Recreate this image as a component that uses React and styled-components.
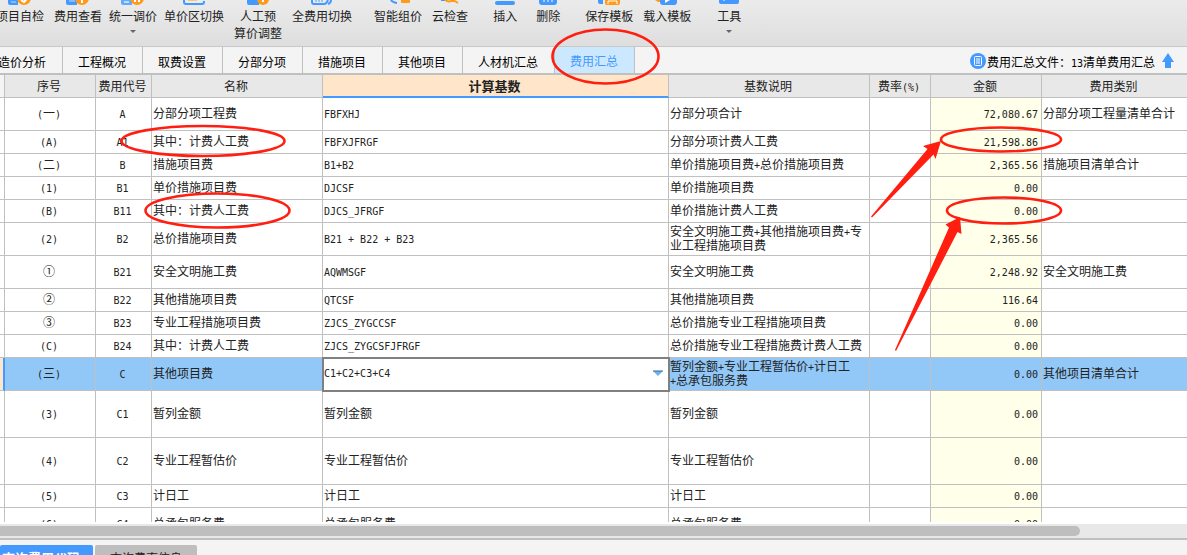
import React from "react";
import styled, { createGlobalStyle, css } from "styled-components";

const BLUE = "#4499ff";
const ORANGE = "#ff9a1a";
const LINE = "#c0c0c0";
const RED = "#ff1e10";

const GlobalStyle = createGlobalStyle`
  *, *::before, *::after { box-sizing: border-box; }
  body { margin: 0; background: #f4f4f4; }
  button, input { font: inherit; color: inherit; }
`;

const Page = styled.div`
  position: relative;
  display: flex;
  flex-direction: column;
  height: 100vh;
  overflow: hidden;
  font-family: "Noto Sans CJK SC", sans-serif;
  font-size: 12px;
  line-height: 17px;
  color: #222;
`;

const Toolbar = styled.header`
  display: flex;
  flex: none;
  height: 47px;
  gap: 10px;
  margin-left: -4px;
  overflow: hidden;
  background: linear-gradient(#ebebeb, #dedede);
  border-bottom: 1px solid #c8c8c8;
`;

const ToolGroup = styled.div`
  display: flex;
  align-items: flex-start;
  gap: ${(p) => p.$gap || 10}px;
  margin-left: ${(p) => p.$lead || 0}px;
`;

const ToolButton = styled.button`
  display: flex;
  flex-direction: column;
  align-items: center;
  padding: 0;
  border: 0;
  background: none;
  white-space: pre;
  cursor: pointer;
`;

const ToolIcon = styled.svg`
  display: block;
  width: 24px;
  height: 7px;
  margin: 0 -2px;
`;

const Caret = styled.svg`
  width: 6px;
  height: 4px;
  margin-top: 6px;
`;

const TabBar = styled.nav`
  display: flex;
  flex: none;
  align-items: stretch;
  height: 28px;
  background: #f4f4f4;
  border-bottom: 2px solid ${LINE};
  color: #000;
`;

const TabList = styled.div`
  display: flex;
  flex: 1;
  margin-left: -17px;
`;

const Tab = styled.button`
  flex: none;
  padding: ${(p) => (p.$active ? 0 : 2)}px 16px 0 15px;
  border: 0;
  border-right: 1px solid ${LINE};
  background: ${(p) => (p.$active ? "#cce8ff" : "transparent")};
  color: ${(p) => (p.$active ? BLUE : "inherit")};
  cursor: pointer;
`;

const FileInfo = styled.div`
  display: flex;
  align-items: center;
  gap: 1px;
  padding: 2px 13px 0 0;
`;

const FileArrow = styled.svg`
  margin-left: 6px;
`;

const GridView = styled.main`
  flex: 1;
  min-height: 0;
  overflow: hidden;
  background: #fff;
  border-bottom: 2px solid #fff;
`;

const Grid = styled.table`
  width: 100%;
  table-layout: fixed;
  border-collapse: separate;
  border-spacing: 0;
  line-height: 14px;

  th:last-child,
  td:last-child {
    border-right: 0;
  }
`;

const Head = styled.th`
  height: 23px;
  padding: 0 2px 0 0;
  font-size: ${(p) => (p.$current ? 13 : 12)}px;
  font-weight: ${(p) => (p.$current ? 700 : 400)};
  background: ${(p) => (p.$current ? "#ffe6cb" : p.$blank ? "#f4f4f4" : "#e8e8e8")};
  border-right: 1px solid ${LINE};
  border-bottom: ${(p) => (p.$current ? `2px solid ${BLUE}` : `1px solid ${LINE}`)};
`;

const Row = styled.tr`
  height: ${(p) => p.$height}px;
  background: ${(p) => (p.$selected ? "#92c8f8" : "#fff")};
`;

const Cell = styled.td`
  padding: 0 3px 2px 1px;
  text-align: ${(p) => p.$align || "left"};
  white-space: pre;
  border-right: 1px solid ${LINE};
  border-bottom: 1px solid ${LINE};
  ${(p) => p.$amount && css`background: ${p.$selected ? "#92c8f8" : "#ffffea"};`}
  ${(p) =>
    p.$editing &&
    css`
      background: #fff;
      outline: 2px solid #808080;
      outline-offset: -1px;
    `}
`;

const Marker = styled(Cell)`
  padding: 0;
  ${(p) =>
    p.$selected &&
    css`
      background: #ffe6cb;
      border-right: 2px solid ${BLUE};
    `}
`;

const Latin = styled.span`
  font-family: "DejaVu Sans Mono", monospace;
  font-size: 10px;
  line-height: 10px;
`;

const Combo = styled.div`
  display: flex;
  align-items: center;
`;

const ComboInput = styled.input`
  flex: 1;
  min-width: 0;
  height: 20px;
  padding: 0;
  border: 0;
  outline: 0;
  background: none;
  font-family: "DejaVu Sans Mono", monospace;
  font-size: 10px;
`;

const ComboButton = styled.button`
  display: flex;
  padding: 4px 2px;
  border: 0;
  background: none;
`;

const ScrollTrack = styled.div`
  flex: none;
  height: 16px;
  padding: 2px 0;
  background: #e8e8e8;
  border-bottom: 2px solid ${LINE};
`;

const ScrollThumb = styled.div`
  width: 91%;
  height: 10px;
  background: #bebebe;
  border-radius: 0 5px 5px 0;
`;

const BottomTabs = styled.footer`
  display: flex;
  flex: none;
  align-items: flex-start;
  gap: 2px;
  height: 15px;
  padding-top: 5px;
  overflow: hidden;
  background: #f4f4f4;
`;

const BottomTab = styled.button`
  flex: none;
  height: 25px;
  padding: 0 ${(p) => (p.$active ? 13 : 15)}px 0 ${(p) => (p.$active ? 2 : 15)}px;
  border: 0;
  border-radius: 2px 2px 0 0;
  font-size: ${(p) => (p.$active ? 13 : 12)}px;
  font-weight: ${(p) => (p.$active ? 700 : 400)};
  color: ${(p) => (p.$active ? "#fff" : "#222")};
  background: ${(p) => (p.$active ? BLUE : "#bebebe")};
`;

const Annotations = styled.svg`
  position: absolute;
  top: 0;
  left: 0;
  pointer-events: none;
`;

const icons = {
  check: (
    <>
      <path d="M0 0h10v5H2q-2 0-2-2z" fill={BLUE} />
      <path d="M3 2h5" stroke="#b9dcff" />
      <circle cx="16" cy="-2" r="7" fill={ORANGE} />
      <path d="M13 0l3 2 3-3" stroke="#fff" strokeWidth="2" fill="none" />
    </>
  ),
  view: (
    <>
      <path d="M0 0h11v5H2q-2 0-2-2z" fill={BLUE} />
      <path d="M3 1h6" stroke="#b9dcff" />
      <circle cx="16" cy="-2" r="7" fill={ORANGE} />
      <path d="M16 0v3" stroke="#fff" strokeWidth="2" />
    </>
  ),
  adjust: (
    <>
      <path d="M0 0h11v5H2q-2 0-2-2z" fill="#62aaff" />
      <path d="M3 2h5" stroke="#b9dcff" strokeWidth="2" />
      <circle cx="16" cy="-2" r="7" fill={ORANGE} />
      <path d="M14 0v2M18 0v2" stroke="#fff" strokeWidth="2" />
    </>
  ),
  region: (
    <>
      <path d="M2 0v2q0 2 2 2h16q2 0 2-2V1" fill="none" stroke={BLUE} strokeWidth="2" />
      <path d="M6 0h9" stroke="#ffc27a" strokeWidth="2" />
    </>
  ),
  labor: (
    <>
      <path d="M1 0h12v5H3Q1 5 1 3z" fill={BLUE} />
      <circle cx="17" cy="-1" r="6" fill={ORANGE} />
      <path d="M17 0v2" stroke="#fff" strokeWidth="2" />
    </>
  ),
  full: (
    <>
      <path d="M2 0v2q0 2 2 2h10q2 0 3-2l1-2" fill="none" stroke={BLUE} strokeWidth="2" />
      <path d="M5 1h2M9 0v2M12 0v2" stroke={BLUE} />
      <path d="M18 4q3-1 3-4" fill="none" stroke={BLUE} strokeWidth="2" />
    </>
  ),
  smart: (
    <>
      <path d="M5 0q1 2 6 3" fill="none" stroke={BLUE} strokeWidth="2" />
      <rect x="15" y="-4" width="9" height="7" rx="1" fill={ORANGE} />
    </>
  ),
  cloud: (
    <>
      <path d="M3 0h4" stroke={BLUE} strokeWidth="2" />
      <path d="M7 0q4 3 8 0l5 3" fill="none" stroke={ORANGE} strokeWidth="2" />
    </>
  ),
  insert: <rect x="2" y="1" width="20" height="4" rx="2" fill={BLUE} />,
  remove: (
    <>
      <path d="M3 0h18v2q0 3-3 3H6Q3 5 3 2z" fill={BLUE} />
      <path d="M8 0v2M12 0v2M16 0v2" stroke="#fff" />
    </>
  ),
  save: (
    <>
      <path d="M1 0h5v4H3Q1 4 1 2z" fill={BLUE} />
      <path d="M8 0h15v3q0 2-2 2H10q-2 0-2-2z" fill={ORANGE} />
      <path d="M11 4V1h9v3" fill="none" stroke="#fff" />
    </>
  ),
  load: (
    <>
      <path d="M0 0h6v2H3z" fill={ORANGE} />
      <path d="M5 0h17v2q0 3-3 3H8Q5 5 5 2z" fill={BLUE} />
      <path d="M10 0v3l5-3z" fill="#fff" />
    </>
  ),
  tools: (
    <>
      <path d="M2 0h20v2q0 2-2 2H4Q2 4 2 2z" fill={BLUE} />
      <path d="M6 0h2" stroke="#fff" />
    </>
  ),
};

const toolGroups = [
  { tools: [["项目自检", "check"]] },
  { gap: 7, tools: [["费用查看", "view"], ["统一调价", "adjust", true], ["单价区切换", "region"]] },
  { tools: [["人工预\n算价调整", "labor"], ["全费用切换", "full"]] },
  { lead: 12, tools: [["智能组价", "smart"], ["云检查", "cloud"]] },
  { lead: 15, gap: 19, tools: [["插入", "insert"], ["删除", "remove"]] },
  { lead: 15, tools: [["保存模板", "save"], ["载入模板", "load"]] },
  { lead: 16, tools: [["工具", "tools", true]] },
];

const tabs = ["造价分析", "工程概况", "取费设置", "分部分项", "措施项目", "其他项目", "人材机汇总", "费用汇总"];

const columnWidths = [5, 91, 56, 171, 346, 201, 61, 111];
const headings = ["序号", "费用代号", "名称", "计算基数", "基数说明", "费率(%)", "金额", "费用类别"];

const rows = [
  [33, "(一)", "A", "分部分项工程费", "FBFXHJ", "分部分项合计", "72,080.67", "分部分项工程量清单合计"],
  [23, "(A)", "A1", "其中：计费人工费", "FBFXJFRGF", "分部分项计费人工费", "21,598.86", ""],
  [23, "(二)", "B", "措施项目费", "B1+B2", "单价措施项目费+总价措施项目费", "2,365.56", "措施项目清单合计"],
  [23, "(1)", "B1", "单价措施项目费", "DJCSF", "单价措施项目费", "0.00", ""],
  [23, "(B)", "B11", "其中：计费人工费", "DJCS_JFRGF", "单价措施计费人工费", "0.00", ""],
  [33, "(2)", "B2", "总价措施项目费", "B21 + B22 + B23", "安全文明施工费+其他措施项目费+专\n业工程措施项目费", "2,365.56", ""],
  [33, "①", "B21", "安全文明施工费", "AQWMSGF", "安全文明施工费", "2,248.92", "安全文明施工费"],
  [23, "②", "B22", "其他措施项目费", "QTCSF", "其他措施项目费", "116.64", ""],
  [23, "③", "B23", "专业工程措施项目费", "ZJCS_ZYGCCSF", "总价措施专业工程措施项目费", "0.00", ""],
  [23, "(C)", "B24", "其中：计费人工费", "ZJCS_ZYGCSFJFRGF", "总价措施专业工程措施费计费人工费", "0.00", ""],
  [33, "(三)", "C", "其他项目费", "C1+C2+C3+C4", "暂列金额+专业工程暂估价+计日工\n+总承包服务费", "0.00", "其他项目清单合计"],
  [47, "(3)", "C1", "暂列金额", "暂列金额", "暂列金额", "0.00", ""],
  [47, "(4)", "C2", "专业工程暂估价", "专业工程暂估价", "专业工程暂估价", "0.00", ""],
  [23, "(5)", "C3", "计日工", "计日工", "计日工", "0.00", ""],
  [33, "(6)", "C4", "总承包服务费", "总承包服务费", "总承包服务费", "0.00", ""],
];
const selectedCode = "C";

// Latin runs are set in a fixed-width face, half as wide as a Chinese character.
function Mixed({ text }) {
  return text
    .split(/([\x20-\x7e]+)/)
    .filter(Boolean)
    .map((part, i) => (/^[\x20-\x7e]/.test(part) ? <Latin key={i}>{part}</Latin> : part));
}

function GridRow({ row }) {
  const [height, no, code, name, basis, note, amount, category] = row;
  const selected = code === selectedCode;
  return (
    <Row $height={height} $selected={selected}>
      <Marker $selected={selected} />
      <Cell $align="center"><Mixed text={no} /></Cell>
      <Cell $align="center"><Mixed text={code} /></Cell>
      <Cell><Mixed text={name} /></Cell>
      <Cell $editing={selected}>
        {selected ? (
          <Combo>
            <ComboInput aria-label="计算基数" defaultValue={basis} />
            <ComboButton aria-label="选择">
              <svg width="10" height="6" viewBox="0 0 10 6">
                <path d="M0 1h10L5 6z" fill="#6db3e8" />
                <path d="M0 1h10" stroke="#2f6c9c" strokeWidth="1" />
              </svg>
            </ComboButton>
          </Combo>
        ) : (
          <Mixed text={basis} />
        )}
      </Cell>
      <Cell><Mixed text={note} /></Cell>
      <Cell />
      <Cell $align="right" $amount $selected={selected}><Mixed text={amount} /></Cell>
      <Cell><Mixed text={category} /></Cell>
    </Row>
  );
}

export default function App() {
  return (
    <Page>
      <GlobalStyle />
      <Toolbar>
        {toolGroups.map((group, i) => (
          <ToolGroup key={i} $gap={group.gap} $lead={group.lead}>
            {group.tools.map(([label, icon, menu]) => (
              <ToolButton key={label}>
                <ToolIcon viewBox="0 0 24 7">{icons[icon]}</ToolIcon>
                {label}
                {menu && (
                  <Caret viewBox="0 0 6 4">
                    <path d="M0 0h6L3 3z" fill="#666" />
                  </Caret>
                )}
              </ToolButton>
            ))}
          </ToolGroup>
        ))}
      </Toolbar>

      <TabBar>
        <TabList>
          {tabs.map((tab) => (
            <Tab key={tab} $active={tab === "费用汇总"}>{tab}</Tab>
          ))}
        </TabList>
        <FileInfo>
          <svg width="16" height="16" viewBox="0 0 16 16">
            <circle cx="8" cy="8" r="8" fill={BLUE} />
            <rect x="4.500" y="3.500" width="7" height="9" rx="1" fill="none" stroke="#fff" />
            <path d="M6 6h4M6 8h4M6 10h4" stroke="#fff" />
          </svg>
          <span>费用汇总文件：<Latin>13</Latin>清单费用汇总</span>
          <FileArrow width="12" height="16" viewBox="0 0 12 16">
            <path d="M6 0l6 9H9v6H3V9H0z" fill={BLUE} />
          </FileArrow>
        </FileInfo>
      </TabBar>

      <GridView>
        <Grid>
          <colgroup>
            {columnWidths.map((w, i) => <col key={i} width={w} />)}
            <col />
          </colgroup>
          <thead>
            <tr>
              <Head $blank />
              {headings.map((h) => (
                <Head key={h} scope="col" $current={h === "计算基数"}><Mixed text={h} /></Head>
              ))}
            </tr>
          </thead>
          <tbody>
            {rows.map((row) => <GridRow key={row[2]} row={row} />)}
          </tbody>
        </Grid>
      </GridView>

      <ScrollTrack><ScrollThumb /></ScrollTrack>

      <BottomTabs>
        <BottomTab $active>查询费用代码</BottomTab>
        <BottomTab>查询费率信息</BottomTab>
      </BottomTabs>

      <Annotations width="1187" height="555" viewBox="0 0 1187 555" aria-hidden="true">
        <g fill="none" stroke={RED} strokeWidth="2.6">
          <ellipse cx="605.500" cy="56.500" rx="53" ry="27" />
          <ellipse cx="203" cy="141" rx="81.500" ry="15" />
          <ellipse cx="217.500" cy="210.500" rx="72" ry="17" />
          <ellipse cx="1001" cy="139.500" rx="60" ry="12" />
          <ellipse cx="1004" cy="210.500" rx="57" ry="13" />
        </g>
        <g fill={RED}>
          <path d="M941 141L923 146 927.500 149 871 216.500 872 217.500 933.500 154.500 935.500 159z" />
          <path d="M960 217L945.500 224.500 949 227.500 895 350 896 351 957.500 232 961.500 234z" />
        </g>
      </Annotations>
    </Page>
  );
}
